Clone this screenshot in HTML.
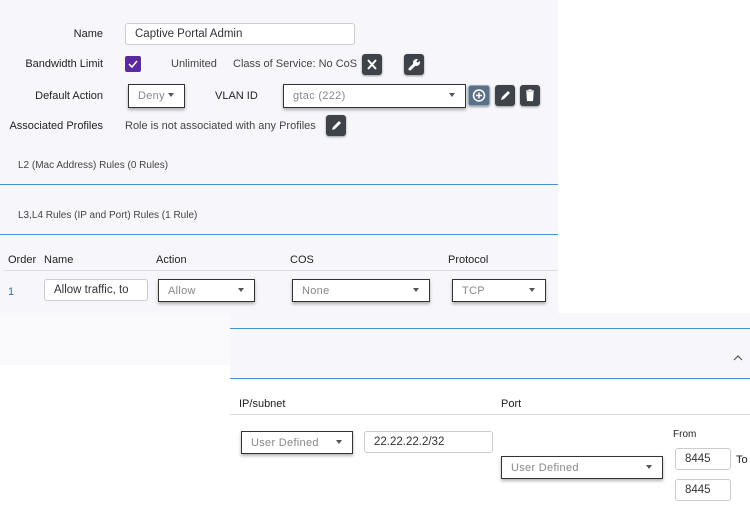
<!DOCTYPE html>
<html><head><style>
*{box-sizing:border-box;margin:0;padding:0}
body{width:750px;height:520px;background:#fff;font-family:"Liberation Sans",sans-serif;font-size:11px;color:#222;position:relative;overflow:hidden}
.a{position:absolute}
.lbl{font-size:11px;color:#222;text-align:right}
.inp{position:absolute;background:#fff;border:1px solid #ccc;border-radius:3px;font-size:11.5px;color:#333;padding-left:9px;display:flex;align-items:center}
.sel{position:absolute;background:#fff;border:1.5px solid #333;box-shadow:0 2px 3px rgba(0,0,0,.3);font-size:11px;color:#888;padding-left:9px;display:flex;align-items:center;letter-spacing:.3px}
.sel:after{content:"";position:absolute;right:10px;top:50%;margin-top:-3px;border-left:3px solid transparent;border-right:3px solid transparent;border-top:4px solid #555}
.btn{position:absolute;width:20px;height:21px;background:#3d4348;border-radius:3px;box-shadow:0 1px 2px rgba(0,0,0,.4)}
.blue{position:absolute;height:1px;background:#4a90d9}
</style></head><body>
<div class="a" style="left:0;top:0;width:558px;height:313px;background:#f7f7fb"></div>
<div class="a" style="left:0;top:313px;width:230px;height:52px;background:#fafafc"></div>
<div class="a" style="left:230px;top:313px;width:520px;height:65px;background:#f7f7fb"></div>

<div class="a lbl" style="left:0;top:28px;width:103px">Name</div>
<div class="inp" style="left:125px;top:23px;width:230px;height:22px">Captive Portal Admin</div>
<div class="a lbl" style="left:0;top:58px;width:103px">Bandwidth Limit</div>
<div class="a" style="left:125px;top:56px;width:16px;height:16px;background:#5b2a9e;border-radius:2px"><svg width="16" height="16"><path d="M4 8l3 3 5-6" stroke="#fff" stroke-width="1.5" fill="none"/></svg></div>
<div class="a" style="left:171px;top:58px;color:#444">Unlimited</div>
<div class="a" style="left:233px;top:58px;color:#444">Class of Service: No CoS</div>
<div class="btn" style="left:362px;top:54px"><svg width="20" height="21"><path d="M6 6l8 9M14 6l-8 9" stroke="#fff" stroke-width="2"/></svg></div>
<div class="btn" style="left:404px;top:54px"><svg width="20" height="21"><path d="M6 15l5-5" stroke="#fff" stroke-width="3" stroke-linecap="round"/><circle cx="12.5" cy="8.5" r="3.5" fill="#fff"/><path d="M13 8l3-3" stroke="#3d4348" stroke-width="2"/></svg></div>

<div class="a lbl" style="left:0;top:90px;width:103px">Default Action</div>
<div class="sel" style="left:128px;top:84px;width:57px;height:24px">Deny</div>
<div class="a" style="left:215px;top:90px;color:#222">VLAN ID</div>
<div class="sel" style="left:283px;top:84px;width:183px;height:24px">gtac (222)</div>
<div class="btn" style="left:468px;top:85px;width:22px;background:#5d6f86;border:1px solid #8ab"><svg width="20" height="19"><circle cx="10" cy="9.5" r="5.5" stroke="#fff" stroke-width="1.5" fill="none"/><path d="M10 6.5v6M7 9.5h6" stroke="#fff" stroke-width="1.5"/></svg></div>
<div class="btn" style="left:495px;top:85px"><svg width="20" height="21"><path d="M6 15l1-3 6-6 2 2-6 6z" fill="#fff"/></svg></div>
<div class="btn" style="left:520px;top:85px"><svg width="20" height="21"><path d="M6 6h8M8.5 5h3M7 7.5h6l-.5 8h-5z" stroke="#fff" stroke-width="1.2" fill="#fff"/></svg></div>

<div class="a lbl" style="left:0;top:120px;width:103px">Associated Profiles</div>
<div class="a" style="left:125px;top:120px;color:#444">Role is not associated with any Profiles</div>
<div class="btn" style="left:326px;top:115px"><svg width="20" height="21"><path d="M6 15l1-3 6-6 2 2-6 6z" fill="#fff"/></svg></div>

<div class="a" style="left:18px;top:160px;color:#444;font-size:10px">L2 (Mac Address) Rules (0 Rules)</div>
<div class="blue" style="left:0;top:184px;width:558px"></div>
<div class="a" style="left:18px;top:210px;color:#444;font-size:10px">L3,L4 Rules (IP and Port) Rules (1 Rule)</div>
<div class="blue" style="left:0;top:234px;width:558px"></div>

<div class="a" style="left:8px;top:254px">Order</div>
<div class="a" style="left:44px;top:254px">Name</div>
<div class="a" style="left:156px;top:254px">Action</div>
<div class="a" style="left:290px;top:254px">COS</div>
<div class="a" style="left:448px;top:254px">Protocol</div>
<div class="a" style="left:4px;top:270px;width:554px;height:1px;background:#ddd"></div>
<div class="a" style="left:8px;top:286px;color:#3a6ea5">1</div>
<div class="inp" style="left:44px;top:279px;width:104px;height:22px">Allow traffic, to</div>
<div class="sel" style="left:158px;top:279px;width:97px;height:23px">Allow</div>
<div class="sel" style="left:292px;top:279px;width:138px;height:23px">None</div>
<div class="sel" style="left:452px;top:279px;width:94px;height:23px">TCP</div>

<div class="blue" style="left:230px;top:328px;width:520px"></div>
<svg class="a" style="left:733px;top:354px" width="10" height="8"><path d="M1 6l4-4 4 4" stroke="#555" stroke-width="1.2" fill="none"/></svg>
<div class="blue" style="left:230px;top:378px;width:520px"></div>
<div class="a" style="left:239px;top:398px">IP/subnet</div>
<div class="a" style="left:501px;top:398px">Port</div>
<div class="a" style="left:230px;top:414px;width:520px;height:1px;background:#ddd"></div>
<div class="sel" style="left:241px;top:431px;width:112px;height:23px">User Defined</div>
<div class="inp" style="left:364px;top:431px;width:129px;height:22px">22.22.22.2/32</div>
<div class="a" style="left:673px;top:429px;font-size:10px">From</div>
<div class="sel" style="left:501px;top:456px;width:162px;height:23px">User Defined</div>
<div class="inp" style="left:675px;top:448px;width:56px;height:22px">8445</div>
<div class="a" style="left:736px;top:454px">To</div>
<div class="inp" style="left:675px;top:479px;width:56px;height:22px">8445</div>
</body></html>
